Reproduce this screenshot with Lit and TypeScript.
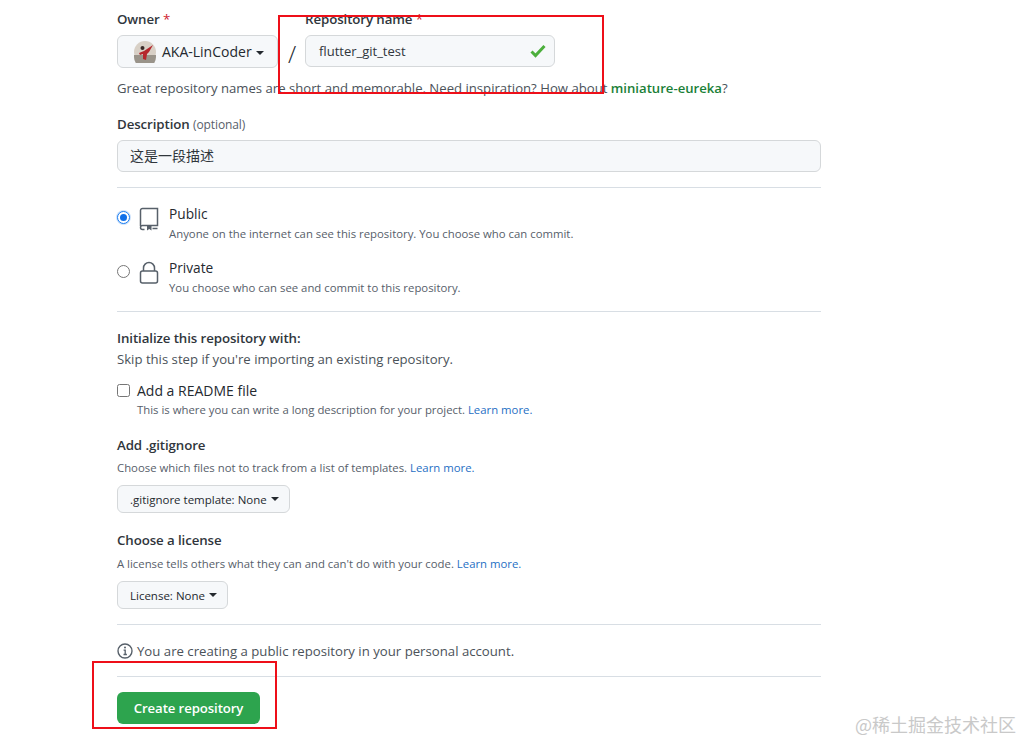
import { LitElement, html, css } from "lit";
import { customElement } from "lit/decorators.js";

const caret = html`<span class="caret"></span>`;

@customElement("app-root")
export class AppRoot extends LitElement {
  static styles = css`
    :host {
      display: block;
      position: relative;
      width: 1021px;
      height: 741px;
      overflow: hidden;
      background: #fff;
      color: #24292f;
      font-family: "Open Sans", "Noto Sans CJK SC", sans-serif;
      font-size: 13px;
    }
    .form {
      width: 704px;
      margin-left: 117px;
      padding-top: 10px;
      display: flex;
      flex-direction: column;
    }
    .label {
      font-size: 13.3px;
      font-weight: 600;
      line-height: 18px;
      letter-spacing: -0.1px;
      color: #30363c;
    }
    .req {
      color: #cf222e;
      font-weight: 400;
    }
    .owner-row {
      display: flex;
      align-items: flex-start;
      height: 69px;
    }
    .owner {
      width: 161px;
      display: flex;
      flex-direction: column;
      gap: 7px;
    }
    .repo {
      display: flex;
      flex-direction: column;
      gap: 7px;
      width: 250px;
    }
    .slash {
      width: 28px;
      font-size: 24px;
      font-weight: 300;
      text-align: center;
      line-height: 32px;
      margin: 28px -1px 0 0;
    }
    .btn {
      box-sizing: border-box;
      display: inline-flex;
      align-items: center;
      background: #f6f8fa;
      border: 1px solid #d5d8da;
      border-radius: 6px;
      white-space: nowrap;
    }
    .owner-btn {
      height: 33px;
      padding-left: 16px;
      gap: 6px;
      font-size: 14px;
      font-weight: 500;
    }
    .avatar {
      width: 22px;
      height: 22px;
      flex: none;
    }
    .caret {
      display: inline-block;
      width: 0;
      height: 0;
      margin-left: 4px;
      vertical-align: middle;
      border-style: solid;
      border-width: 4px 4px 0;
      border-color: #24292f transparent transparent;
    }
    .input {
      box-sizing: border-box;
      display: flex;
      align-items: center;
      justify-content: space-between;
      height: 32px;
      padding: 0 8px 0 13px;
      background: #f6f8fa;
      border: 1px solid #d5d8da;
      border-radius: 6px;
      font-size: 13px;
      color: #30363c;
    }
    .note {
      font-size: 11.35px;
      line-height: 18px;
      color: #57606a;
    }
    .help {
      font-size: 13.15px;
      line-height: 18px;
      color: #4b5259;
    }
    .help b {
      font-weight: 600;
      color: #1a7f37;
    }
    .desc {
      display: flex;
      flex-direction: column;
      gap: 6px;
      margin-top: 18px;
    }
    .opt {
      font-size: 12px;
      font-weight: 400;
      color: #57606a;
    }
    .cjk {
      font-family: "Noto Sans CJK SC", sans-serif;
      font-size: 14px;
      margin-left: -1px;
      padding-bottom: 2px;
    }
    hr {
      width: 100%;
      margin: 0;
      border: 0;
      border-top: 1px solid #d8dee4;
    }
    .visibility {
      padding-top: 17px;
      height: 123px;
      box-sizing: border-box;
      display: flex;
      flex-direction: column;
      gap: 16px;
    }
    .vis-row {
      display: flex;
      align-items: flex-start;
      height: 38px;
    }
    .radio {
      box-sizing: border-box;
      display: flex;
      align-items: center;
      justify-content: center;
      width: 13px;
      height: 13px;
      flex: none;
      border-radius: 50%;
      border: 1px solid #767676;
      background: #fff;
      margin-right: 9px;
      margin-top: 6px;
    }
    .radio.on {
      border: 1.5px solid #1a7cf0;
      box-shadow: 0 0 0 1px #cfe3fb;
    }
    .radio.on::after {
      content: "";
      width: 7px;
      height: 7px;
      border-radius: 50%;
      background: #0f6fe8;
    }
    .vis-icon {
      width: 20px;
      height: 24px;
      margin: 2px 10px 0 0;
      flex: none;
    }
    .title {
      font-size: 13.7px;
      font-weight: 500;
      line-height: 18px;
      margin-bottom: 2px;
    }
    .a {
      color: #1f6fc4;
    }
    .section {
      display: flex;
      flex-direction: column;
    }
    .check {
      display: flex;
      align-items: center;
      gap: 7px;
      font-size: 14px;
      font-weight: 500;
      height: 18px;
      margin-top: 13px;
    }
    .box {
      box-sizing: border-box;
      width: 13px;
      height: 13px;
      border: 1px solid #767676;
      border-radius: 2.5px;
      background: #fff;
    }
    .skip {
      margin-top: 3px;
    }
    .readme-note {
      margin: 2px 0 0 20px;
    }
    .ignore-note {
      margin: 5px 0 8px;
    }
    .license-note {
      margin: 6px 0 8px;
    }
    .small-btn {
      height: 28px;
      padding: 0 10px 0 12px;
      font-size: 11.5px;
      align-self: flex-start;
      color: #24292f;
    }
    .small-btn b {
      font-weight: 500;
    }
    .info {
      box-sizing: border-box;
      display: flex;
      align-items: center;
      gap: 4px;
      height: 51px;
      font-size: 13.2px;
      color: #4b5259;
    }
    .create {
      box-sizing: border-box;
      align-self: flex-start;
      height: 32px;
      width: 143px;
      margin-top: 15px;
      display: flex;
      align-items: center;
      justify-content: center;
      background: #2da44e;
      border-radius: 6px;
      color: #fff;
      font-size: 13.2px;
      font-weight: 600;
      letter-spacing: -0.1px;
    }
    .mark {
      position: absolute;
      box-sizing: border-box;
      border: 2px solid #ee0f19;
      pointer-events: none;
    }
    .mark.repo-mark {
      left: 278px;
      top: 15px;
      width: 326px;
      height: 79px;
    }
    .mark.btn-mark {
      left: 92px;
      top: 661px;
      width: 185px;
      height: 68px;
    }
    .watermark {
      position: absolute;
      right: 5px;
      top: 713px;
      font-family: "Noto Sans CJK SC", sans-serif;
      font-size: 18px;
      line-height: 22px;
      color: #c9c9c9;
      white-space: nowrap;
    }
    .gap-top-15 {
      margin-top: 15px;
    }
    .pad-17 {
      padding-top: 17px;
    }
    .pad-18 {
      padding-top: 18px;
    }
  `;

  render() {
    return html`
      <div class="form">
        <div class="owner-row">
          <div class="owner">
            <div class="label">Owner <span class="req">*</span></div>
            <div class="btn owner-btn">
              <svg class="avatar" viewBox="0 0 22 22">
                <circle cx="11" cy="11" r="11" fill="#d8d0c6"></circle>
                <path d="M0 14h22v2a11 11 0 0 1-22 0z" fill="#9a948a"></path>
                <path d="M5 12l5-2 9-6-4 7-2 2-1 6-3-1 0-5-3 1z" fill="#b5262c"></path>
                <circle cx="8.5" cy="7" r="2" fill="#3a2a28"></circle>
              </svg>
              <span>AKA-LinCoder${caret}</span>
            </div>
          </div>
          <div class="slash">/</div>
          <div class="repo">
            <div class="label">Repository name <span class="req">*</span></div>
            <div class="input">
              <span>flutter_git_test</span>
              <svg width="16" height="16" viewBox="0 0 16 16">
                <path d="M1.5 8.5l4 4 9-9.5" fill="none" stroke="#4caf3c" stroke-width="3"></path>
              </svg>
            </div>
          </div>
        </div>
        <div class="help">
          Great repository names are short and memorable. Need inspiration? How about
          <b>miniature-eureka</b>?
        </div>
        <div class="desc">
          <div class="label">Description <span class="opt">(optional)</span></div>
          <div class="input"><span class="cjk">这是一段描述</span></div>
        </div>
        <hr class="gap-top-15" />
        <div class="visibility">
          <div class="vis-row">
            <span class="radio on"></span>
            <svg class="vis-icon" viewBox="0 0 20 24" fill="none" stroke="#57606a" stroke-width="1.5">
              <path d="M1.5 19V3.5a2 2 0 0 1 2-2h15v17H3.5a2 2 0 0 0-2 2 2 2 0 0 0 2 2h2"></path>
              <path d="M8 19v4.5l2.2-1.6 2.3 1.6V19z" fill="#57606a" stroke="none"></path>
              <path d="M13.5 21.5h5"></path>
            </svg>
            <div>
              <div class="title">Public</div>
              <div class="note">Anyone on the internet can see this repository. You choose who can commit.</div>
            </div>
          </div>
          <div class="vis-row">
            <span class="radio"></span>
            <svg class="vis-icon" viewBox="0 0 20 24" fill="none" stroke="#57606a" stroke-width="1.5">
              <rect x="1.5" y="10" width="17" height="12" rx="2"></rect>
              <path d="M4.5 10V7a5.5 5.5 0 0 1 11 0v3"></path>
            </svg>
            <div>
              <div class="title">Private</div>
              <div class="note">You choose who can see and commit to this repository.</div>
            </div>
          </div>
        </div>
        <hr />
        <div class="section pad-17">
          <div class="label">Initialize this repository with:</div>
          <div class="help skip">Skip this step if you're importing an existing repository.</div>
          <div class="check"><span class="box"></span>Add a README file</div>
          <div class="note readme-note">
            This is where you can write a long description for your project. <span class="a">Learn more.</span>
          </div>
        </div>
        <div class="section pad-17">
          <div class="label">Add .gitignore</div>
          <div class="note ignore-note">
            Choose which files not to track from a list of templates. <span class="a">Learn more.</span>
          </div>
          <div class="btn small-btn">.gitignore template:&nbsp;<b>None</b>${caret}</div>
        </div>
        <div class="section pad-18">
          <div class="label">Choose a license</div>
          <div class="note license-note">
            A license tells others what they can and can't do with your code. <span class="a">Learn more.</span>
          </div>
          <div class="btn small-btn">License:&nbsp;<b>None</b>${caret}</div>
        </div>
        <hr class="gap-top-15" />
        <div class="info">
          <svg width="16" height="16" viewBox="0 0 16 16" fill="none" stroke="#57606a" stroke-width="1.4">
            <circle cx="8" cy="8" r="7"></circle>
            <path d="M6.6 7.2H8.2V11.5M6.5 11.5h3.4" stroke-width="1.3"></path>
            <circle cx="8" cy="4.6" r="1" fill="#57606a" stroke="none"></circle>
          </svg>
          You are creating a public repository in your personal account.
        </div>
        <hr />
        <div class="create">Create repository</div>
      </div>
      <div class="mark repo-mark"></div>
      <div class="mark btn-mark"></div>
      <div class="watermark">@稀土掘金技术社区</div>
    `;
  }
}
